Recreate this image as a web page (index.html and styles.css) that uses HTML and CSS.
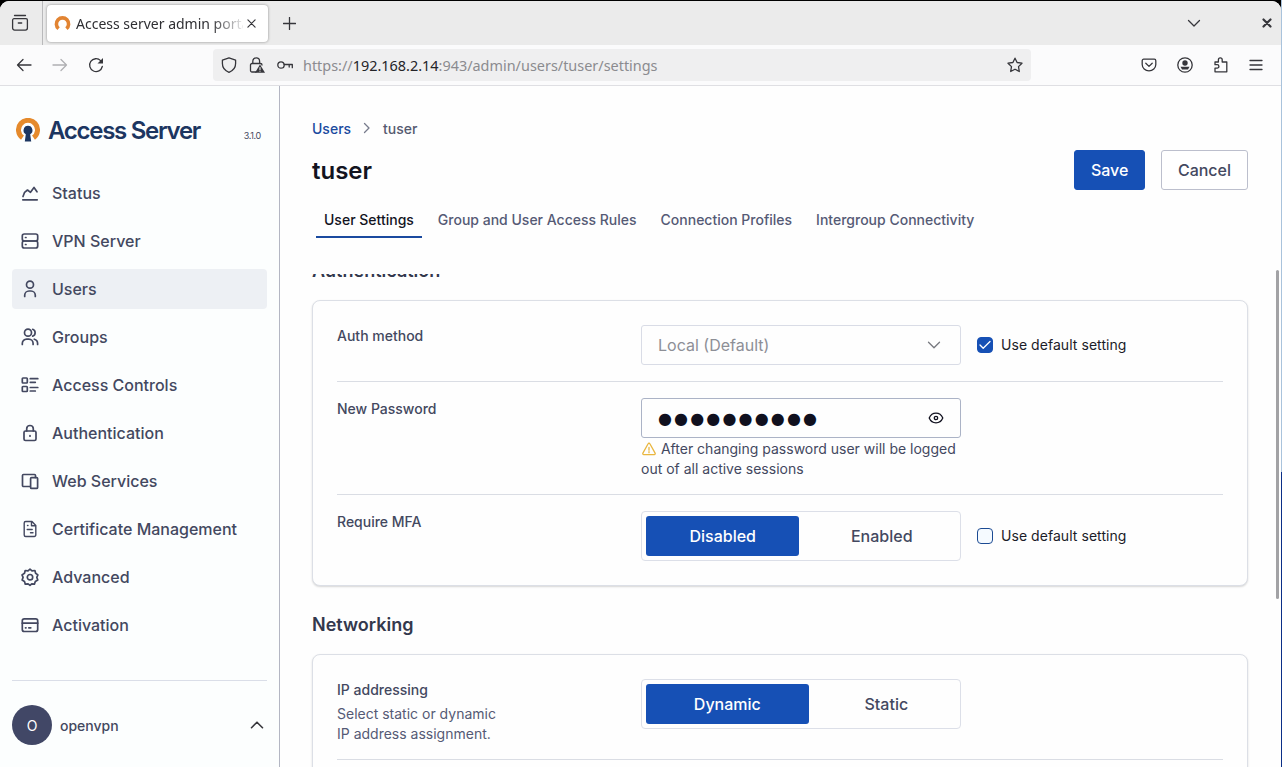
FILE: index.html
```html
<!DOCTYPE html>
<html lang="en">
<head>
    <meta charset="UTF-8">
    <meta name="viewport" content="width=device-width, initial-scale=1.0">
    <title>Access server admin portal</title>
    <link rel="stylesheet" href="styles.css">
</head>
<body>
    <div class="window">
        <!-- Tab strip -->
        <div class="tabstrip">
            <div class="view-btn">
                <svg width="18" height="18" viewBox="0 0 18 18"><path d="M3.500 1.500h11M3 4.700h12a1.400 1.400 0 0 1 1.400 1.400v8a2 2 0 0 1-2 2H3.600a2 2 0 0 1-2-2v-8A1.400 1.400 0 0 1 3 4.700zM7.300 9h3.400"/></svg>
            </div>
            <div class="browser-tab">
                <svg class="favicon" width="17" height="16" viewBox="0 0 17 16"><path d="M4.600 13.700A6.100 6.100 0 1 1 12.400 13.700"/></svg>
                <span class="tab-title">Access server admin portal</span>
                <svg class="tab-close" width="9" height="9" viewBox="0 0 10 10"><path d="M1 1l8 8M9 1l-8 8"/></svg>
            </div>
            <svg class="new-tab" width="13" height="13" viewBox="0 0 13 13"><path d="M6.500 .5v12M.5 6.500h12"/></svg>
            <svg class="all-tabs" width="14" height="9" viewBox="0 0 14 9"><path d="M1.500 1.500L7 7l5.500-5.500"/></svg>
            <svg class="win-close" width="10" height="10" viewBox="0 0 10 10"><path d="M1.500 1.500l7 7M8.500 1.500l-7 7"/></svg>
        </div>

        <!-- Toolbar -->
        <div class="toolbar">
            <svg class="back" width="16" height="16" viewBox="0 0 16 16"><path d="M15 8H1.500M7 2.500L1.500 8 7 13.500"/></svg>
            <svg class="forward" width="16" height="16" viewBox="0 0 16 16"><path d="M1 8h13.500M9 2.500L14.500 8 9 13.500"/></svg>
            <svg class="reload" width="16" height="16" viewBox="0 0 16 16"><path d="M14.300 9.500A6.400 6.400 0 1 1 12.600 3.600L14 5"/><path class="solid" d="M15 1v5.500H9.500z"/></svg>
            <div class="urlbar">
                <svg width="16" height="16" viewBox="0 0 16 16"><path d="M8 .8l6.600 2.400v3.300c0 4-2.600 7.200-6.600 8.800-4-1.600-6.600-4.800-6.600-8.800V3.200z"/></svg>
                <svg width="16" height="16" viewBox="0 0 16 16"><path d="M3.800 6.500V4.200a3.400 3.400 0 0 1 6.800 0v2.300M7 15H3a1.500 1.500 0 0 1-1.500-1.500V8A1.500 1.500 0 0 1 3 6.500h8.500A1.500 1.500 0 0 1 13 8"/><path class="solid" d="M11 7.500l5 8.300H6z"/><path class="mark" d="M11 10.500v2.200M11 14.200v.1"/></svg>
                <svg width="17" height="16" viewBox="0 0 17 16"><circle cx="4" cy="8" r="3.200"/><path d="M7.200 7.500h8.100v3.200M12.200 7.500v2.500"/></svg>
                <span class="url">https://<b>192.168.2.14</b>:943/admin/users/tuser/settings</span>
                <svg class="star" width="16" height="16" viewBox="0 0 16 16"><path d="M8 1.200l2.100 4.300 4.900.7-3.500 3.400.8 4.900L8 12.200l-4.300 2.300.8-4.900L1 6.200l4.900-.7z"/></svg>
            </div>
            <div class="tools">
                <svg width="16" height="16" viewBox="0 0 16 16"><path d="M2.700 2.200h10.600a1.500 1.500 0 0 1 1.500 1.500v3.800a6.800 6.300 0 0 1-13.600 0V3.700a1.500 1.500 0 0 1 1.500-1.500zM4.800 6.300L8 9.400l3.200-3.100"/></svg>
                <svg width="16" height="16" viewBox="0 0 16 16"><circle cx="8" cy="8" r="7.200"/><circle class="solid" cx="8" cy="6" r="2.700"/><path class="solid" d="M3.500 9.800h9L11 12.600H5z"/></svg>
                <svg width="16" height="16" viewBox="0 0 16 16"><path d="M2 5h3.400V2.800a1.900 1.900 0 0 1 3.800 0V5h4.600v9.800H2v-3.700h2.200a1.700 1.700 0 0 0 0-3.400H2z"/></svg>
                <svg width="14" height="16" viewBox="0 0 14 16"><path d="M1 3.500h12M1 8h12M1 12.500h12"/></svg>
            </div>
        </div>

        <div class="page">
            <!-- Sidebar -->
            <aside class="sidebar">
                <div class="brand">
                    <svg width="24" height="24" viewBox="0 0 24 24"><path class="ring" d="M6.500 19.600A9.500 9.500 0 1 1 17.500 19.600"/><path class="key" d="M12 7.800a4.500 4.500 0 0 1 2.200 8.400l1 7.200H8.800l1-7.200A4.500 4.500 0 0 1 12 7.800z"/></svg>
                    <span class="brand-name">Access Server</span>
                    <span class="version">3.1.0</span>
                </div>
                <nav>
                    <a class="nav-item"><svg viewBox="0 0 20 20"><path d="M2.800 16.800h14.400M3 13.500l1.600-4.200L7.500 7l3 2.300L14 4.500l3 4.300"/></svg>Status</a>
                    <a class="nav-item"><svg viewBox="0 0 20 20"><rect x="2.300" y="3" width="15.400" height="7" rx="2"/><rect x="2.300" y="10" width="15.400" height="7" rx="2"/><path d="M5.500 6.500h.5M5.500 13.500h.5"/></svg>VPN Server</a>
                    <a class="nav-item active"><svg viewBox="0 0 20 20"><circle cx="10" cy="5.700" r="3.500"/><path d="M4.700 17.500v-1.200a4.300 4.300 0 0 1 4.300-4.300h2a4.300 4.300 0 0 1 4.300 4.300v1.200"/></svg>Users</a>
                    <a class="nav-item"><svg viewBox="0 0 20 20"><circle cx="8" cy="5.700" r="3.500"/><path d="M2.300 17.500v-1a4.300 4.300 0 0 1 4.300-4.300h2.200a4.300 4.300 0 0 1 4.300 4.300v1M12.700 2.300a3.600 3.600 0 0 1 0 6.800M14.300 12.200a4.400 4.400 0 0 1 3.300 4.300v1"/></svg>Groups</a>
                    <a class="nav-item"><svg viewBox="0 0 20 20"><rect x="2.300" y="3" width="5" height="5" rx=".7"/><rect x="2.300" y="11.500" width="5" height="5" rx=".7"/><path d="M10.300 3.700h7.500M10.300 7.300h5M10.300 12.500h7.500M10.300 16h5"/></svg>Access Controls</a>
                    <a class="nav-item"><svg viewBox="0 0 20 20"><rect x="4" y="8" width="12" height="9.500" rx="1.500"/><path d="M6.700 8V5.800a3.300 3.300 0 0 1 6.600 0V8M10 12.500v.7"/></svg>Authentication</a>
                    <a class="nav-item"><svg viewBox="0 0 20 20"><path d="M10 15.500H3.500a1 1 0 0 1-1-1v-10a1 1 0 0 1 1-1h11a1 1 0 0 1 1 1v2"/><rect x="10.600" y="6.600" width="7" height="10.800" rx="1"/></svg>Web Services</a>
                    <a class="nav-item"><svg class="thin" viewBox="0 0 20 20"><path d="M12 2.500H5.700A1.500 1.500 0 0 0 4.200 4v12a1.500 1.500 0 0 0 1.500 1.500h8.600a1.500 1.500 0 0 0 1.500-1.500V6.500zM11.500 2.800v4h4M7.500 6.500h.5M7.200 10.500h5M10.500 13.800h2.500"/></svg>Certificate Management</a>
                    <a class="nav-item"><svg viewBox="0 0 20 20"><path d="M10 2.200l2 1.700 2.900-.4.700 2.800 2.300 1.600-1.100 2.500 1 2.600-2.500 1.500-.9 2.700-2.700-.4L10 18.300l-1.900-1.500-2.800.4-.8-2.700-2.400-1.500 1-2.600L2 7.900l2.500-1.600.7-2.800 2.800.4z"/><circle cx="10" cy="10.200" r="2.700"/></svg>Advanced</a>
                    <a class="nav-item"><svg viewBox="0 0 20 20"><rect x="2.300" y="3.800" width="15.400" height="12.700" rx="2"/><path d="M2.300 8.200h15.400M5.500 12.800h.5M8.800 12.800h2"/></svg>Activation</a>
                </nav>
                <div class="account">
                    <span class="avatar">O</span>
                    <span class="account-name">openvpn</span>
                    <svg width="14" height="8" viewBox="0 0 14 8"><path d="M1.500 6.700L7 1.200l5.500 5.500"/></svg>
                </div>
            </aside>

            <!-- Content -->
            <main>
                <div class="breadcrumb">
                    <a>Users</a>
                    <svg width="8" height="12" viewBox="0 0 8 12"><path d="M1.500 1.500L6 6l-4.500 4.500"/></svg>
                    <span>tuser</span>
                </div>
                <div class="title-row">
                    <h1>tuser</h1>
                    <button class="btn primary">Save</button>
                    <button class="btn">Cancel</button>
                </div>
                <div class="tabs">
                    <a class="tab current">User Settings</a>
                    <a class="tab">Group and User Access Rules</a>
                    <a class="tab">Connection Profiles</a>
                    <a class="tab">Intergroup Connectivity</a>
                </div>

                <div class="scroll-area">
                    <h2 class="scrolled">Authentication</h2>
                    <section class="card">
                        <div class="row">
                            <div class="label">Auth method</div>
                            <div class="select">Local (Default)
                                <svg width="14" height="8" viewBox="0 0 14 8"><path d="M1.500 1.200L7 6.700l5.500-5.500"/></svg>
                            </div>
                            <label class="check">
                                <span class="box checked"><svg width="12" height="10" viewBox="0 0 12 10"><path d="M1 5l3.200 3.200L11 1.500"/></svg></span>
                                <span class="check-text">Use default setting</span>
                            </label>
                        </div>
                        <div class="row">
                            <div class="label">New Password</div>
                            <div>
                                <div class="password">
                                    <span class="dots">●●●●●●●●●●</span>
                                    <svg width="16" height="12" viewBox="0 0 16 12"><path d="M1.200 6C2.500 3 5 1.200 8 1.200S13.500 3 14.800 6C13.500 9 11 10.800 8 10.800S2.500 9 1.200 6z"/><circle cx="8" cy="6" r="1.700"/></svg>
                                </div>
                                <p class="hint"><svg width="16" height="14" viewBox="0 0 16 14"><path d="M7.100 1.800a1 1 0 0 1 1.800 0l5.200 9.300a1 1 0 0 1-.9 1.500H2.800a1 1 0 0 1-.9-1.500zM8 5.500v2.700M8 9.700v1"/></svg> After changing password user will be logged out of all active sessions</p>
                            </div>
                        </div>
                        <div class="row">
                            <div class="label">Require MFA</div>
                            <div class="toggle">
                                <span class="option on">Disabled</span>
                                <span class="option">Enabled</span>
                            </div>
                            <label class="check">
                                <span class="box"></span>
                                <span class="check-text">Use default setting</span>
                            </label>
                        </div>
                    </section>

                    <h2>Networking</h2>
                    <section class="card">
                        <div class="row">
                            <div class="label">IP addressing
                                <p>Select static or dynamic<br>IP address assignment.</p>
                            </div>
                            <div class="toggle">
                                <span class="option on">Dynamic</span>
                                <span class="option">Static</span>
                            </div>
                        </div>
                        <div class="row"></div>
                    </section>
                </div>
                <div class="scrollbar"></div>
            </main>
        </div>
    </div>
</body>
</html>
```

FILE: styles.css
```css
* {
    box-sizing: border-box;
}

/* Desktop behind the window */
body {
    margin: 0;
    height: 767px;
    padding: 1px 1px 0 0;
    overflow: hidden;
    background: linear-gradient(90deg, #000 1281px, transparent 1281px) 0 0 / 100% 12px no-repeat,
        linear-gradient(#a9c3dc 472px, #0b2f87 472px);
    font-family: Inter, sans-serif;
    color: #434860;
}

svg {
    flex: none;
    fill: none;
    stroke: #36363b;
    stroke-width: 1.3;
    stroke-linecap: round;
    stroke-linejoin: round;
}

svg .solid {
    fill: #36363b;
    stroke: none;
}

.window {
    display: flex;
    flex-direction: column;
    height: 766px;
    border-radius: 9px 9px 0 0;
    overflow: hidden;
    background: #fefefe;
}

/* Tab strip */
.tabstrip {
    display: flex;
    align-items: center;
    height: 44px;
    background: #ebebeb;
}

.view-btn {
    display: flex;
    align-items: center;
    width: 43px;
    height: 44px;
    padding-left: 11px;
    border-right: 1px solid #b9b9bb;
}

.browser-tab {
    display: flex;
    align-items: center;
    width: 221px;
    height: 37px;
    margin-left: 4px;
    padding-left: 7px;
    border-radius: 4px;
    background: #fff;
    box-shadow: 0 0 3px rgba(0, 0, 0, 0.4);
}

.favicon {
    stroke: #e28432;
    stroke-width: 3.6;
    stroke-linecap: butt;
}

.tab-title {
    width: 167px;
    margin: 0 3px 0 5px;
    overflow: hidden;
    white-space: nowrap;
    font: 14px "Noto Sans", sans-serif;
    color: #2f2f33;
    -webkit-mask-image: linear-gradient(90deg, #000 135px, transparent 170px);
    mask-image: linear-gradient(90deg, #000 135px, transparent 170px);
}

.tab-close {
    margin-left: 1px;
}

.new-tab {
    margin-left: 15px;
}

.all-tabs {
    margin: 0 0 0 auto;
}

.win-close {
    margin: 0 9px 0 61px;
    stroke-width: 2.2;
}

/* Toolbar */
.toolbar {
    display: flex;
    align-items: center;
    height: 41px;
    padding-left: 16px;
    border-bottom: 1px solid #dfdfe3;
    background: #fbfbfc;
}

.forward {
    margin: 0 20px;
    stroke: #b0b0b3;
}

.urlbar {
    display: flex;
    align-items: center;
    width: 818px;
    height: 32px;
    margin-left: 109px;
    padding: 0 8px;
    gap: 12px;
    border-radius: 4px;
    background: #efeff0;
}

.urlbar .mark {
    stroke: #efeff0;
    stroke-width: 1.1;
}

.url {
    margin-left: -3px;
    font: 14.430px "Noto Sans", sans-serif;
    color: #8b8b8f;
}

.url b {
    font-weight: 400;
    color: #242428;
}

.star {
    margin-left: auto;
}

.tools {
    display: flex;
    align-items: center;
    gap: 20px;
    margin-left: 110px;
}

/* Page */
.page {
    display: flex;
    flex: 1;
    min-height: 0;
}

.sidebar {
    display: flex;
    flex-direction: column;
    width: 280px;
    padding: 0 12px;
    border-right: 1px solid #b3b6c3;
    background: #fcfefe;
}

.brand {
    display: flex;
    align-items: center;
    height: 87px;
    padding: 0 6px 0 4px;
}

.brand .ring {
    stroke: #e58a2c;
    stroke-width: 5;
    stroke-linecap: butt;
}

.brand .key {
    fill: #1c3661;
    stroke: none;
}

.brand-name {
    margin: 2px 0 0 8px;
    font-size: 24px;
    font-weight: 600;
    letter-spacing: -1.28px;
    color: #1c3661;
}

.version {
    margin: 11px 0 0 auto;
    font-size: 9px;
    letter-spacing: -0.3px;
}

nav {
    display: flex;
    flex-direction: column;
    gap: 8px;
}

.nav-item {
    display: flex;
    align-items: center;
    gap: 12px;
    height: 40px;
    padding-left: 8px;
    border-radius: 4px;
    font-size: 16px;
    font-weight: 500;
}

.nav-item svg {
    width: 20px;
    height: 20px;
    stroke: #434860;
    stroke-width: 1.7;
}

.nav-item svg.thin {
    stroke-width: 1.4;
}

.nav-item.active {
    background: #edf0f4;
}

.account {
    display: flex;
    align-items: center;
    height: 87px;
    margin-top: auto;
    padding: 2px 3px 0 0;
    gap: 8px;
    border-top: 1px solid #dadee8;
    font-size: 14px;
    font-weight: 500;
}

.account svg {
    margin-left: auto;
    stroke-width: 1.6;
}

.avatar {
    display: flex;
    align-items: center;
    justify-content: center;
    width: 40px;
    height: 40px;
    border-radius: 50%;
    background: #414766;
    font-weight: 400;
    color: #fff;
}

/* Content */
main {
    position: relative;
    display: flex;
    flex-direction: column;
    flex: 1;
    padding: 32px 33px 0 32px;
}

.breadcrumb {
    display: flex;
    align-items: center;
    gap: 12px;
    height: 20px;
    font-size: 14px;
    font-weight: 500;
    color: #555a70;
}

.breadcrumb a {
    color: #1a4a9f;
}

.breadcrumb svg {
    stroke: #777b8c;
}

.title-row {
    display: flex;
    align-items: center;
    gap: 16px;
    margin-top: 12px;
}

h1 {
    flex: 1;
    margin: 0;
    font-size: 24px;
    font-weight: 600;
    color: #13141f;
}

.btn {
    height: 40px;
    padding: 0 16px;
    border: 1px solid #bcbfcd;
    border-radius: 3px;
    background: #fff;
    font: 500 16px Inter, sans-serif;
    color: #434860;
}

.btn.primary {
    width: 71px;
    border-color: #1650b5;
    background: #1650b5;
    color: #fff;
}

.tabs {
    display: flex;
    gap: 8px;
    margin: 12px 0 0 4px;
}

.tab {
    height: 36px;
    padding: 0 8px;
    border-bottom: 2px solid transparent;
    font-size: 14px;
    font-weight: 500;
    line-height: 36px;
    color: #555a75;
}

.tab.current {
    border-color: #1a4a9f;
    color: #13141f;
}

/* The form is scrolled down a little, so its first heading is cut */
.scroll-area {
    flex: 1;
    min-height: 0;
    margin: 36px -10px 0;
    padding: 0 10px;
    overflow: hidden;
}

.scrollbar {
    position: absolute;
    top: 184px;
    right: 2px;
    width: 3px;
    height: 329px;
    border-radius: 2px;
    background: #a2a2a5;
}

h2 {
    margin: 25px 0 15px;
    font-size: 18px;
    font-weight: 600;
    line-height: 28px;
    color: #33384d;
}

h2.scrolled {
    margin-top: -17px;
}

.card {
    padding: 24px;
    border: 1px solid #dcdfe6;
    border-radius: 8px;
    background: #fefefe;
    box-shadow: 0 1px 2px rgba(0, 0, 0, 0.16);
}

.row {
    display: grid;
    grid-template-columns: 288px 320px 1fr;
    column-gap: 16px;
}

.row + .row {
    margin-top: 16px;
    padding-top: 16px;
    border-top: 1px solid #dadde4;
}

.label {
    font-size: 14px;
    font-weight: 500;
    line-height: 22px;
}

.label p {
    margin: 3px 0 -1px;
    font-weight: 400;
    line-height: 20px;
    color: #555a75;
}

.select,
.password {
    display: flex;
    align-items: center;
    justify-content: space-between;
    height: 40px;
    padding: 0 19px 0 16px;
    border: 1px solid #d9dce6;
    border-radius: 3px;
    font-size: 16px;
    color: #8d8f96;
}

.select svg {
    stroke: #77797f;
}

.password {
    padding-right: 16px;
    border-color: #abb3c6;
    color: #10101e;
}

.dots {
    font-family: "DejaVu Sans", sans-serif;
    font-size: 16px;
    letter-spacing: 2.15px;
}

.password svg {
    stroke: #10101e;
}

.hint {
    margin: 1px 0 -1px;
    font-size: 14px;
    line-height: 20px;
}

.hint svg {
    vertical-align: -2px;
    stroke: #e9b63f;
}

.check {
    display: flex;
    align-items: center;
    gap: 8px;
    font-size: 14px;
    color: #1b1c28;
}

.check-text {
    padding-bottom: 2px;
    letter-spacing: 0.05px;
}

.box {
    display: flex;
    align-items: center;
    justify-content: center;
    width: 16px;
    height: 16px;
    border: 1px solid #1c4b93;
    border-radius: 4px;
    background: #f5faff;
}

.box.checked {
    border-color: #1650b5;
    background: #1650b5;
}

.box svg {
    stroke: #fff;
}

.toggle {
    display: flex;
    gap: 8px;
    height: 50px;
    padding: 4px;
    border: 1px solid #dcdfe8;
    border-radius: 4px;
}

.option {
    flex: auto;
    border-radius: 3px;
    font-size: 16px;
    font-weight: 500;
    line-height: 40px;
    text-align: center;
}

.option.on {
    background: #1650b5;
    color: #fff;
}
```
